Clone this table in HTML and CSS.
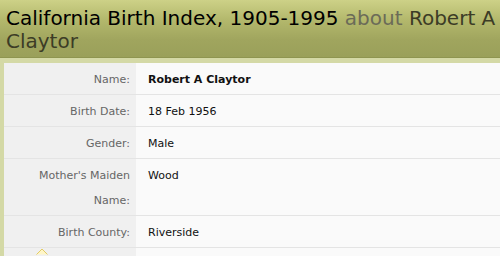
FILE: index.html
```html
<!DOCTYPE html>
<html>
<head>
<meta charset="utf-8">
<link rel="stylesheet" href="styles.css">
</head>
<body>
<header class="title-bar">
  <h1 class="title"><span class="db">California Birth Index, 1905-1995</span> <span class="about">about</span> <span class="person">Robert A Claytor</span></h1>
</header>
<main class="frame">
  <table class="record">
    <colgroup><col class="label-col"><col></colgroup>
    <tr><th>Name:</th><td class="strong">Robert A Claytor</td></tr>
    <tr><th>Birth Date:</th><td>18 Feb 1956</td></tr>
    <tr><th>Gender:</th><td>Male</td></tr>
    <tr><th>Mother's Maiden Name:</th><td>Wood</td></tr>
    <tr><th>Birth County:</th><td>Riverside</td></tr>
    <tr class="more"><th><svg class="caret" width="12" height="7" viewBox="0 0 12 7"><path d="M0.5 6.5 L6 1 L11.5 6.5" fill="#fff6c8" stroke="#e2cb66" stroke-width="1"/></svg></th><td></td></tr>
  </table>
</main>
</body>
</html>
```
FILE: styles.css
```css
html, body {
  margin: 0;
  padding: 0;
  background: #fafafa;
  overflow: hidden;
}
body {
  font-family: "DejaVu Sans", Verdana, sans-serif;
  height: 256px;
}
.title-bar {
  background: linear-gradient(to bottom, #cdd187 0%, #b3b86c 35%, #a0a55e 70%, #9aa05a 100%);
  border-bottom: 1px solid #8e9550;
  padding: 7px 0 0 6px;
  height: 50px;
  box-sizing: content-box;
}
.title {
  margin: 0;
  font-weight: normal;
  font-size: 20px;
  line-height: 23px;
  color: #000;
}
.about { color: #6b6b58; }
.person { color: #3c3c26; }
.frame {
  background: #d4d9a6;
  padding: 5px 0 0 4px;
  height: 193px;
  overflow: hidden;
}
.record {
  border-collapse: collapse;
  table-layout: fixed;
  width: 100%;
  font-size: 11px;
}
.label-col { width: 132px; }
.record th, .record td {
  line-height: 25px;
  padding: 4px 0 2px 0;
  border-bottom: 1px solid #e4e4e4;
  vertical-align: top;
}
.record th {
  background: #f0f0f0;
  color: #666;
  font-weight: normal;
  text-align: right;
  padding-right: 6px;
  padding-left: 0;
}
.record td {
  background: #fafafa;
  color: #111;
  padding-left: 12px;
}
.record td.strong { font-weight: bold; }
.record tr.more th, .record tr.more td { height: 40px; border-bottom: none; }
.record tr.more th { text-align: left; padding: 0 0 0 32px; line-height: 7px; }
.caret { display: block; }
```
